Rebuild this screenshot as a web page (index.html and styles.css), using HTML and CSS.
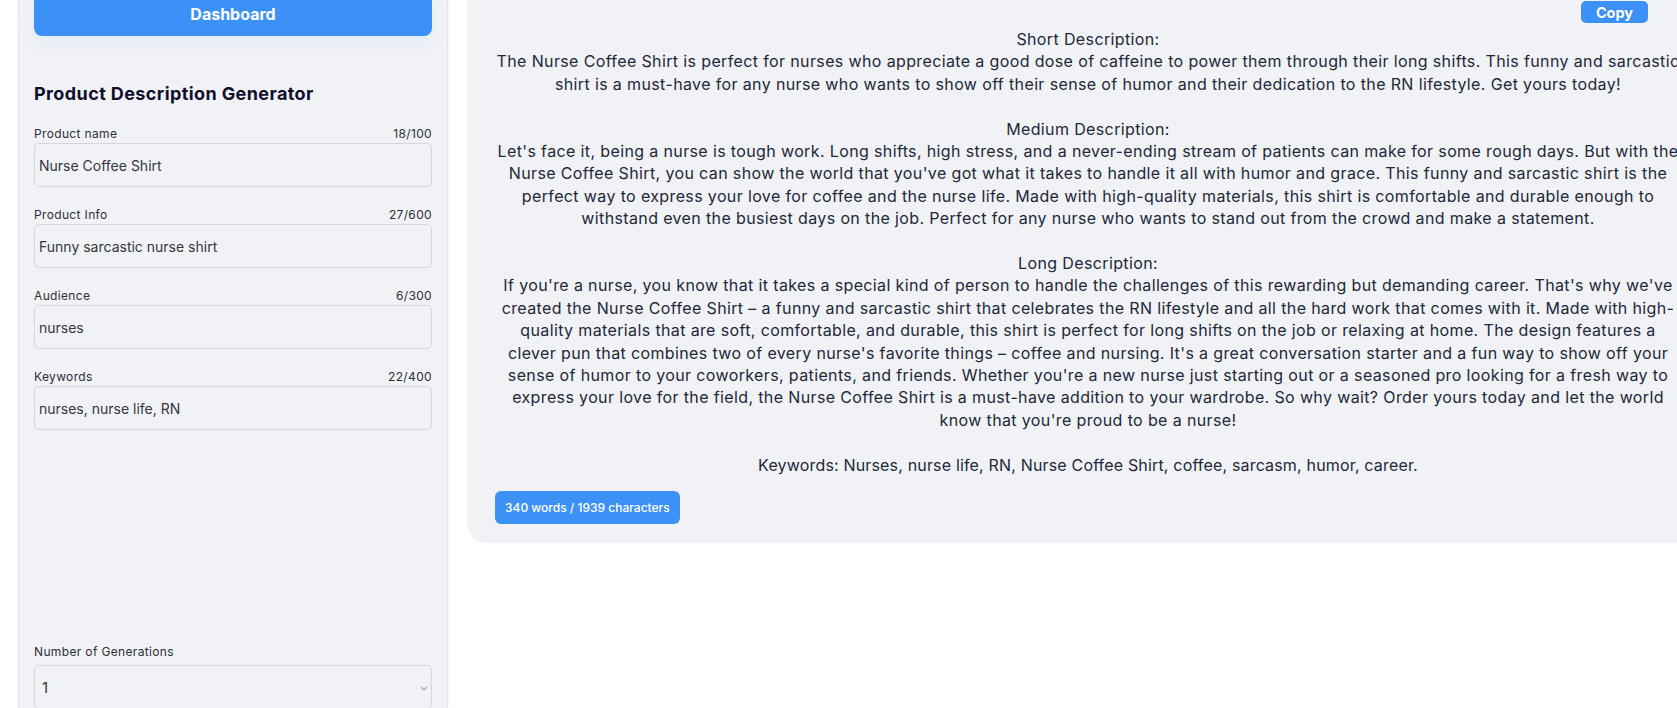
FILE: index.html
```html
<!DOCTYPE html>
<html>
  <head>
    <title>Product Description Generator</title>
    <link rel="stylesheet" href="styles.css">
  </head>
  <body>
    <div class="layout">
      <aside class="sidebar">
        <button class="dashboard-btn">Dashboard</button>

        <h2 class="sidebar-title">Product Description Generator</h2>

        <form class="gen-form">
          <div class="field">
            <div class="field-head">
              <label for="product-name">Product name</label>
              <span class="counter">18/100</span>
            </div>
            <input type="text" id="product-name" value="Nurse Coffee Shirt" />
          </div>

          <div class="field">
            <div class="field-head">
              <label for="product-info">Product Info</label>
              <span class="counter">27/600</span>
            </div>
            <input type="text" id="product-info" value="Funny sarcastic nurse shirt" />
          </div>

          <div class="field">
            <div class="field-head">
              <label for="audience">Audience</label>
              <span class="counter">6/300</span>
            </div>
            <input type="text" id="audience" value="nurses" />
          </div>

          <div class="field">
            <div class="field-head">
              <label for="keywords">Keywords</label>
              <span class="counter">22/400</span>
            </div>
            <input type="text" id="keywords" value="nurses, nurse life, RN" />
          </div>

          <div class="field field-generations">
            <div class="field-head">
              <label for="generations">Number of Generations</label>
            </div>
            <div class="select-wrap">
              <select id="generations">
                <option>1</option>
                <option>2</option>
                <option>3</option>
              </select>
              <svg class="chevron" width="8" height="5" viewBox="0 0 8 5">
                <path d="M1 1l3 3 3-3" fill="none" stroke="#a3a8b3" stroke-width="1.2" />
              </svg>
            </div>
          </div>
        </form>
      </aside>

      <main class="result-card">
        <button class="copy-btn">Copy</button>
        <div class="result-text">
          <p>Short Description:<br />The Nurse Coffee Shirt is perfect for nurses who appreciate a good dose of caffeine to power them through their long shifts. This funny and sarcastic shirt is a must-have for any nurse who wants to show off their sense of humor and their dedication to the RN lifestyle. Get yours today!</p>
          <p>Medium Description:<br />Let's face it, being a nurse is tough work. Long shifts, high stress, and a never-ending stream of patients can make for some rough days. But with the Nurse Coffee Shirt, you can show the world that you've got what it takes to handle it all with humor and grace. This funny and sarcastic shirt is the perfect way to express your love for coffee and the nurse life. Made with high-quality materials, this shirt is comfortable and durable enough to withstand even the busiest days on the job. Perfect for any nurse who wants to stand out from the crowd and make a statement.</p>
          <p class="long-desc">Long Description:<br />If you're a nurse, you know that it takes a special kind of person to handle the challenges of this rewarding but demanding career. That's why we've<br />created the Nurse Coffee Shirt – a funny and sarcastic shirt that celebrates the RN lifestyle and all the hard work that comes with it. Made with high-<br />quality materials that are soft, comfortable, and durable, this shirt is perfect for long shifts on the job or relaxing at home. The design features a<br />clever pun that combines two of every nurse's favorite things – coffee and nursing. It's a great conversation starter and a fun way to show off your<br />sense of humor to your coworkers, patients, and friends. Whether you're a new nurse just starting out or a seasoned pro looking for a fresh way to<br />express your love for the field, the Nurse Coffee Shirt is a must-have addition to your wardrobe. So why wait? Order yours today and let the world<br />know that you're proud to be a nurse!</p>
          <p class="keywords-line">Keywords: Nurses, nurse life, RN, Nurse Coffee Shirt, coffee, sarcasm, humor, career.</p>
        </div>
        <span class="count-badge">340 words / 1939 characters</span>
      </main>
    </div>
  </body>
</html>
```

FILE: styles.css
```css
body {
  margin: 0;
  font-family: Inter, "Open Sans", sans-serif;
  background-color: #ffffff;
  overflow: hidden;
}
.layout {
  display: flex;
  align-items: flex-start;
  gap: 19px;
  height: 708px;
  padding-left: 18px;
  overflow: hidden;
}

/* sidebar */
.sidebar {
  flex-shrink: 0;
  width: 398px;
  height: 717px;
  margin-top: -9px;
  padding: 0 15px 0 15px;
  background-color: #f1f2f6;
  border-left: 1px solid #e3e5ea;
  border-right: 1px solid #e3e5ea;
  box-shadow: 0 0 3px rgba(0, 0, 0, 0.06);
}
.dashboard-btn {
  display: block;
  width: 100%;
  height: 45px;
  border: none;
  border-radius: 8px;
  background-color: #3c91f7;
  color: white;
  font-family: inherit;
  font-size: 16px;
  font-weight: 700;
  box-shadow: 0 10px 18px rgba(60, 145, 247, 0.06);
  cursor: pointer;
}
.sidebar-title {
  margin: 44px 0 17px;
  font-size: 18px;
  line-height: 28px;
  font-weight: 700;
  letter-spacing: 0.4px;
  color: #0f0f2a;
}
.field {
  margin-bottom: 19px;
}
.field-head {
  display: flex;
  justify-content: space-between;
  font-size: 12px;
  line-height: 18px;
  letter-spacing: 0.35px;
  color: #2d2f36;
}
.field input[type="text"],
.field select {
  display: block;
  box-sizing: border-box;
  width: 100%;
  height: 44px;
  padding: 0 4px;
  border: 1px solid #d3d6dc;
  border-radius: 5px;
  background-color: #f1f2f6;
  font-family: inherit;
  font-size: 14px;
  color: #33363d;
}
.field-generations {
  margin-top: 213px;
}
.field-generations .field-head {
  margin-bottom: 4px;
}
.select-wrap {
  position: relative;
}
.field select {
  appearance: none;
  padding-left: 7px;
  font-size: 15px;
}
.chevron {
  position: absolute;
  right: 4px;
  top: 21px;
}

/* result card */
.result-card {
  position: relative;
  flex-shrink: 0;
  width: 1196px;
  margin-top: -20px;
  padding: 48px 23px 19px;
  background-color: #f1f2f6;
  border-radius: 20px;
}
.copy-btn {
  position: absolute;
  top: 21px;
  right: 61px;
  width: 67px;
  height: 22px;
  padding: 0;
  border: none;
  border-radius: 5px;
  background-color: #3c91f7;
  color: white;
  font-family: inherit;
  font-size: 14.5px;
  font-weight: 700;
  cursor: pointer;
}
.result-text {
  text-align: center;
  font-size: 16px;
  line-height: 22.4px;
  letter-spacing: 0.37px;
  color: #222838;
}
.result-text p {
  margin: 0 0 22.4px;
}
.result-text .long-desc {
  white-space: nowrap;
}
.result-text .keywords-line {
  margin-bottom: 15px;
  letter-spacing: 0.17px;
}
.count-badge {
  display: inline-block;
  height: 33px;
  margin-left: 5px;
  padding: 0 10px;
  border-radius: 6px;
  background-color: #3c91f7;
  color: white;
  font-size: 12px;
  font-weight: 500;
  line-height: 33px;
}
```
